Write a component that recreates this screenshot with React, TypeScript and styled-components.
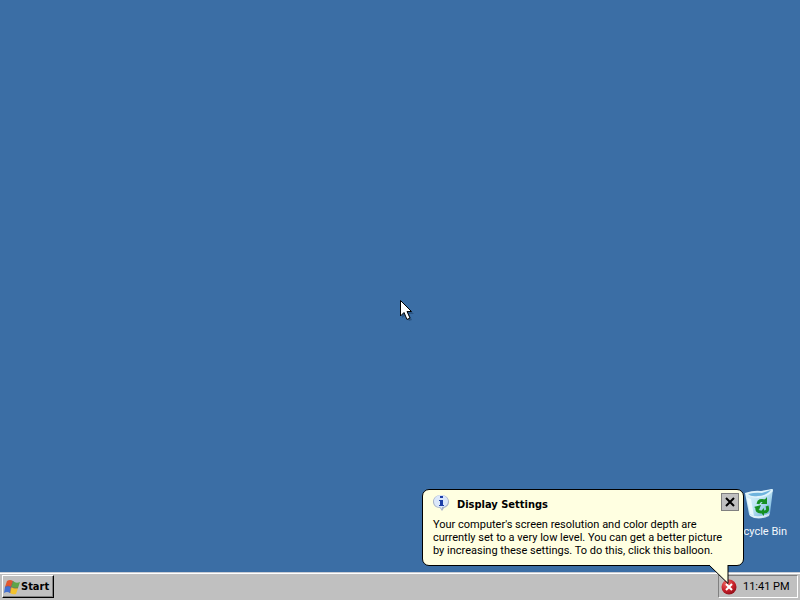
import React, { useState } from "react";
import styled, { createGlobalStyle } from "styled-components";

const GlobalStyle = createGlobalStyle`
  * { box-sizing: border-box; }
  body {
    margin: 0;
    background: #3b6ea5;
    font-family: Roboto, Tahoma, sans-serif;
    font-size: 11px;
    line-height: 13px;
    color: #000;
  }
  button { font: inherit; color: inherit; }
`;

const boldFace = `"DejaVu Sans Condensed", "DejaVu Sans", sans-serif`;

const Screen = styled.div`
  position: relative;
  display: flex;
  flex-direction: column;
  min-height: 100vh;
  overflow: hidden;
  cursor: default;
`;

const Desktop = styled.main`
  flex: 1;
  display: flex;
  justify-content: flex-end;
  align-items: flex-end;
  padding: 0 3px 34px;
`;

const Shortcut = styled.button`
  display: flex;
  flex-direction: column;
  align-items: center;
  gap: 4px;
  width: 76px;
  padding: 0;
  border: 0;
  background: none;
  color: #f4f8fc;
  white-space: nowrap;
`;

const Taskbar = styled.footer`
  display: flex;
  justify-content: space-between;
  align-items: stretch;
  height: 28px;
  padding: 2px 2px;
  background: #c0c0c0;
  border-top: 1px solid #c8ccd4;
  box-shadow: inset 0 1px #fff;
`;

const StartButton = styled.button`
  display: flex;
  align-items: center;
  width: 52px;
  padding: 0 0 0 1px;
  background: #c0c0c0;
  border: 1px solid;
  border-color: #fff #000 #000 #fff;
  box-shadow: inset -1px -1px #808080;
  font-family: ${boldFace};
  font-weight: bold;
`;

const Tray = styled.div`
  display: flex;
  align-items: center;
  gap: 6px;
  width: 80px;
  padding-left: 2px;
  border: 1px solid;
  border-color: #808080 #fff #fff #808080;
  white-space: nowrap;
`;

const TrayButton = styled.button`
  display: flex;
  padding: 0;
  border: 0;
  background: none;
`;

const Balloon = styled.section`
  position: absolute;
  right: 56px;
  bottom: 34px;
  width: 322px;
  padding: 3px 4px 8px 10px;
  background: #ffffe1;
  border: 1px solid #000;
  border-radius: 7px;
`;

const BalloonHeader = styled.header`
  display: flex;
  align-items: flex-end;
  gap: 8px;
`;

const BalloonTitle = styled.h1`
  flex: 1;
  margin: 0;
  font-family: ${boldFace};
  font-size: 11px;
  font-weight: bold;
`;

const CloseButton = styled.button`
  display: flex;
  align-items: center;
  justify-content: center;
  width: 18px;
  height: 18px;
  padding: 0;
  background: #c0c0c0;
  border: 1px solid #808080;
`;

const BalloonText = styled.p`
  margin: 7px 0 0;
  white-space: nowrap;
`;

const Tail = styled.svg`
  position: absolute;
  right: 13px;
  top: 100%;
  pointer-events: none;
`;

const Pointer = styled.svg`
  position: absolute;
  left: 50%;
  top: 50%;
  pointer-events: none;
`;

function RecycleBinIcon() {
  return (
    <svg width="32" height="32" viewBox="0 0 32 32" aria-hidden="true">
      <defs>
        <linearGradient id="bin" x1="0" y1="0" x2="1" y2="1">
          <stop offset="0" stopColor="#e6f7fd" />
          <stop offset="0.5" stopColor="#b9e2f3" />
          <stop offset="1" stopColor="#5fa3d4" />
        </linearGradient>
      </defs>
      <path d="M2 4 L18 3 L30 0 L27 24 Q21 29 15 29 Q8 29 6 25 Z" fill="url(#bin)" />
      <path d="M2 4 Q11 1 18 2 L29 0 L30 2 Q25 8 15 9 Q6 9 2 4 Z" fill="#dff3fb" />
      <path d="M5 5 Q13 3 19 4 L28 1 Q23 7 15 7 Q8 8 5 5 Z" fill="#6fb4de" />
      <path d="M4 9 L7 25 L11 27 L8 10 Z" fill="#f2fcff" opacity=".8" />
      <path d="M6 25 Q15 30 27 24 L26 27 Q15 32 7 27 Z" fill="#effaff" opacity=".8" />
      <g fill="none" stroke="#159022" strokeWidth="3">
        <path d="M15 15 Q16 10 22 12" />
        <path d="M14 18 Q13 23 18 23" />
        <path d="M24 17 Q26 23 21 23" />
      </g>
      <path d="M24 8 V15 H18 Z M11 18 L18 16 L16 21 Z M21 19 V27 L17 23 Z" fill="#159022" />
    </svg>
  );
}

function WindowsFlag() {
  return (
    <svg width="17" height="16" viewBox="0 0 17 16" aria-hidden="true">
      <path d="M3 2 Q6 0 9 2 L7 8 Q4 6 1 8 Z" fill="#e2572e" />
      <path d="M9 2 Q12 5 16 3 L14 9 Q11 10 7 8 Z" fill="#5fa548" />
      <path d="M1 8 Q4 6 7 8 L6 14 Q3 12 0 14 Z" fill="#4270d2" />
      <path d="M7 8 Q11 10 14 9 L12 15 Q9 16 6 14 Z" fill="#f2c22e" />
      <path d="M9 2 L7 8 L6 14 M1 8 Q4 6 7 8 Q11 10 14 9" fill="none" stroke="#7a4a5c" opacity=".5" />
    </svg>
  );
}

function InfoIcon() {
  return (
    <svg width="16" height="16" viewBox="0 0 16 16" aria-hidden="true">
      <path d="M8 0 C13 0 16 3 16 7 C16 10 14 12 11 13 L9 16 L7 13 C3 13 0 10 0 7 C0 3 3 0 8 0Z" fill="#a7b2c8" />
      <path d="M8 0 C12 0 15 3 15 6 C15 10 12 12 9 12 L9 14 L7 12 C3 12 1 10 1 6 C1 3 4 0 8 0Z" fill="#dce8fb" />
      <path d="M7 1h3v2H7z M6 5h4v5h1v1H6v-1h1V6H6z" fill="#1d3fa8" />
    </svg>
  );
}

function ErrorIcon() {
  return (
    <svg width="16" height="16" viewBox="0 0 16 16" aria-hidden="true">
      <defs>
        <radialGradient id="alert" cx=".35" cy=".25" r=".8">
          <stop offset="0" stopColor="#ef6a64" />
          <stop offset=".6" stopColor="#c8202a" />
          <stop offset="1" stopColor="#8c0d18" />
        </radialGradient>
      </defs>
      <circle cx="8" cy="8" r="7.5" fill="url(#alert)" />
      <path d="M5 5l6 6M11 5l-6 6" stroke="#fff" strokeWidth="2" />
    </svg>
  );
}

export default function App() {
  const [open, setOpen] = useState(true);
  return (
    <>
      <GlobalStyle />
      <Screen>
        <Desktop>
          <Shortcut type="button">
            <RecycleBinIcon />
            <span>Recycle Bin</span>
          </Shortcut>
        </Desktop>
        <Taskbar>
          <StartButton type="button">
            <WindowsFlag />
            Start
          </StartButton>
          <Tray>
            <TrayButton type="button" aria-label="Display alert" onClick={() => setOpen(true)}>
              <ErrorIcon />
            </TrayButton>
            <time>11:41 PM</time>
          </Tray>
        </Taskbar>
        {open && (
          <Balloon role="status">
            <BalloonHeader>
              <InfoIcon />
              <BalloonTitle>Display Settings</BalloonTitle>
              <CloseButton type="button" aria-label="Close" onClick={() => setOpen(false)}>
                <svg width="10" height="10" viewBox="0 0 10 10" aria-hidden="true">
                  <path d="M1 1l8 8M9 1l-8 8" stroke="#000" strokeWidth="2" />
                </svg>
              </CloseButton>
            </BalloonHeader>
            <BalloonText>
              Your computer's screen resolution and color depth are
              <br />
              currently set to a very low level. You can get a better picture
              <br />
              by increasing these settings. To do this, click this balloon.
            </BalloonText>
            <Tail width="21" height="20" viewBox="0 0 21 20" aria-hidden="true">
              <path d="M0 0 L19 18 V0 Z" fill="#ffffe1" />
              <path d="M0 0 L19 18.5 V0" fill="none" stroke="#000" />
            </Tail>
          </Balloon>
        )}
        <Pointer width="14" height="22" viewBox="0 0 14 22" aria-hidden="true">
          <path d="M2 3 V18 L6 15 L9 21 L12 20 L9 14 H14 Z" fill="#17375d" opacity=".45" />
          <path d="M.5 .5 V16 L4 12.5 L7 19.5 L10 18 L7 11.5 H11.5 Z" fill="#fff" stroke="#000" />
        </Pointer>
      </Screen>
    </>
  );
}
